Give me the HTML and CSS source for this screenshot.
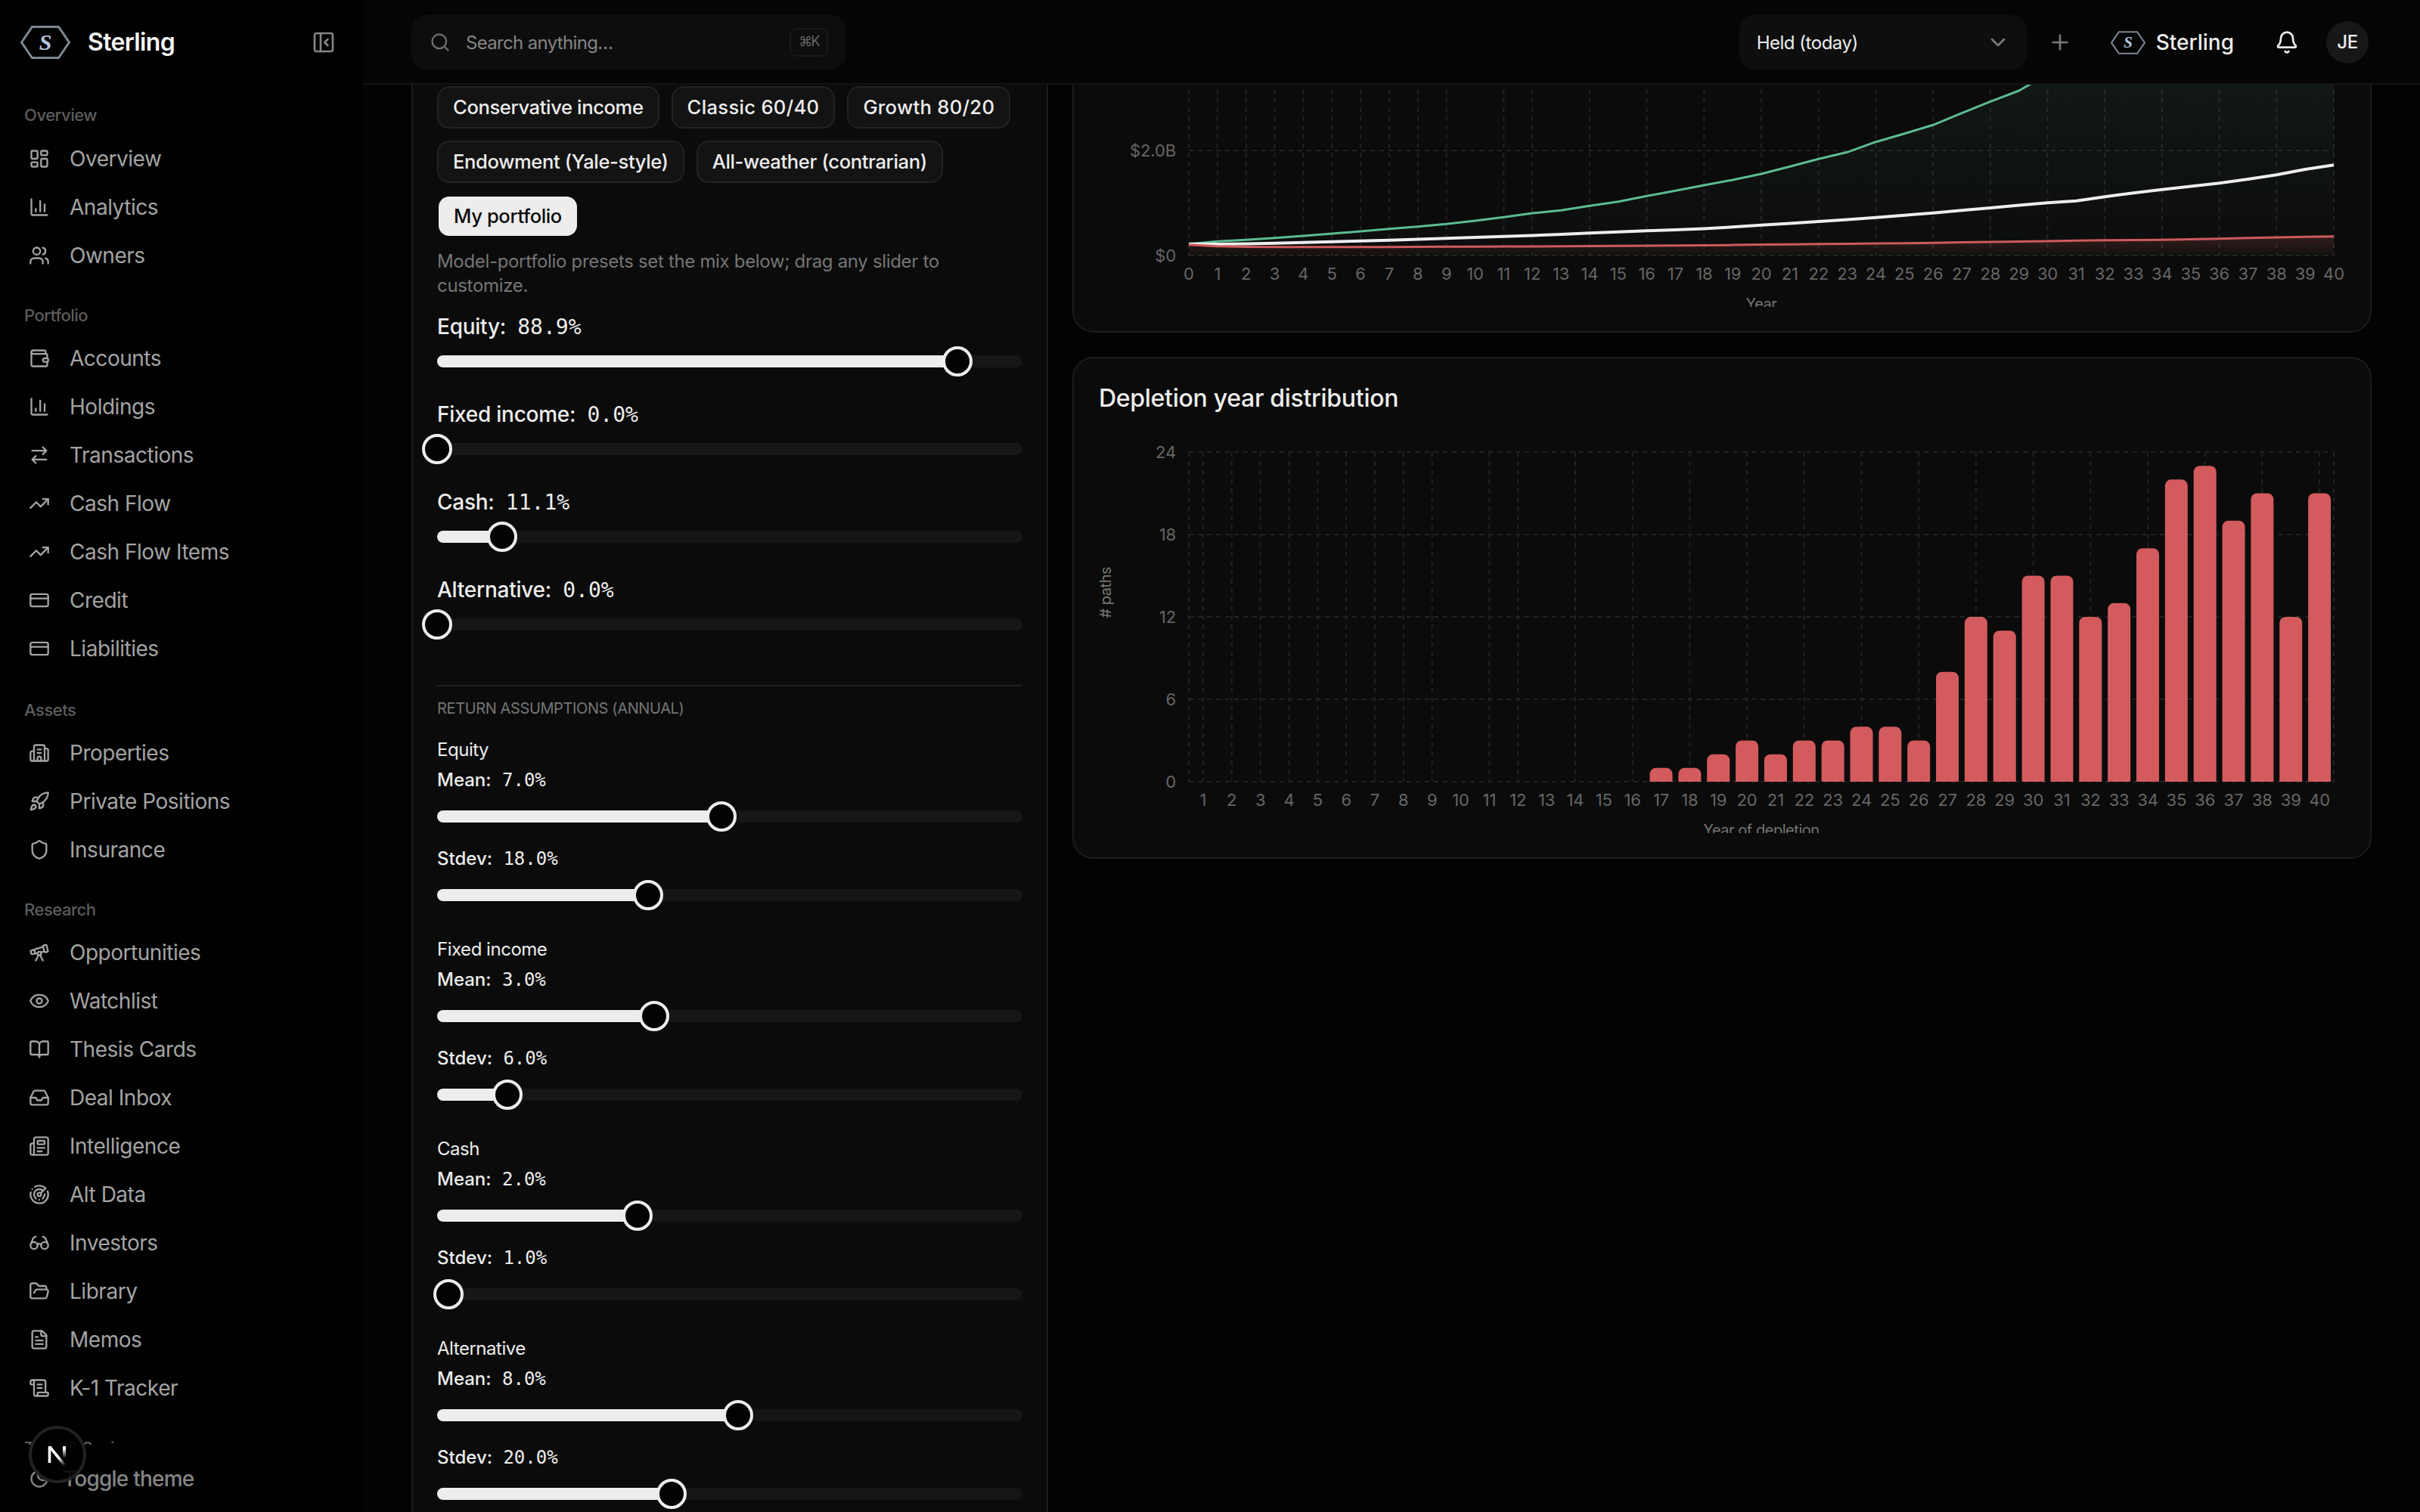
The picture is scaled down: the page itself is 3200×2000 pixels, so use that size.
FILE: index.html
```html
<!DOCTYPE html>
<html lang="en">
<head>
  <meta charset="UTF-8" />
  <meta name="viewport" content="width=device-width, initial-scale=1.0" />
  <title>Sterling</title>
  <link rel="stylesheet" href="styles.css">
</head>
<body>
  <div class="app">
    <!-- Sidebar -->
    <aside class="sidebar">
      <div class="sidebar-header">
        <svg class="logo" viewBox="0 0 66 44">
          <path d="M1.5 22 15.5 1.5h35L64.500 22l-14 20.500h-35z" />
          <text x="33" y="32">S</text>
        </svg>
        <span class="brand">Sterling</span>
        <svg class="icon icon-lg collapse" viewBox="0 0 24 24"><rect width="18" height="18" x="3" y="3" rx="2" /><path d="M9 3v18M16 15l-3-3 3-3" /></svg>
      </div>

      <nav class="nav">
        <div class="nav-group">
          <h3>Overview</h3>
          <a><svg class="icon" viewBox="0 0 24 24"><rect width="7" height="9" x="3" y="3" rx="1" /><rect width="7" height="5" x="14" y="3" rx="1" /><rect width="7" height="9" x="14" y="12" rx="1" /><rect width="7" height="5" x="3" y="16" rx="1" /></svg>Overview</a>
          <a><svg class="icon" viewBox="0 0 24 24"><path d="M3 3v16a2 2 0 0 0 2 2h16M18 17V9M13 17V5M8 17v-3" /></svg>Analytics</a>
          <a><svg class="icon" viewBox="0 0 24 24"><path d="M16 21v-2a4 4 0 0 0-4-4H6a4 4 0 0 0-4 4v2M16 3.128a4 4 0 0 1 0 7.744M22 21v-2a4 4 0 0 0-3-3.870" /><circle cx="9" cy="7" r="4" /></svg>Owners</a>
        </div>
        <div class="nav-group">
          <h3>Portfolio</h3>
          <a><svg class="icon" viewBox="0 0 24 24"><path d="M19 7V4a1 1 0 0 0-1-1H5a2 2 0 0 0 0 4h15a1 1 0 0 1 1 1v4h-3a2 2 0 0 0 0 4h3a1 1 0 0 0 1-1v-2a1 1 0 0 0-1-1" /><path d="M3 5v14a2 2 0 0 0 2 2h15a1 1 0 0 0 1-1v-4" /></svg>Accounts</a>
          <a><svg class="icon" viewBox="0 0 24 24"><path d="M3 3v16a2 2 0 0 0 2 2h16M18 17V9M13 17V5M8 17v-3" /></svg>Holdings</a>
          <a><svg class="icon" viewBox="0 0 24 24"><path d="m16 3 4 4-4 4M20 7H4M8 21l-4-4 4-4M4 17h16" /></svg>Transactions</a>
          <a><svg class="icon" viewBox="0 0 24 24"><path d="M16 7h6v6" /><path d="m22 7-8.500 8.500-5-5L2 17" /></svg>Cash Flow</a>
          <a><svg class="icon" viewBox="0 0 24 24"><path d="M16 7h6v6" /><path d="m22 7-8.500 8.500-5-5L2 17" /></svg>Cash Flow Items</a>
          <a><svg class="icon" viewBox="0 0 24 24"><rect width="20" height="14" x="2" y="5" rx="2" /><path d="M2 10h20" /></svg>Credit</a>
          <a><svg class="icon" viewBox="0 0 24 24"><rect width="20" height="14" x="2" y="5" rx="2" /><path d="M2 10h20" /></svg>Liabilities</a>
        </div>
        <div class="nav-group assets">
          <h3>Assets</h3>
          <a><svg class="icon" viewBox="0 0 24 24"><path d="M10 12h4M10 8h4M14 21v-3a2 2 0 0 0-4 0v3" /><path d="M6 10H4a2 2 0 0 0-2 2v7a2 2 0 0 0 2 2h16a2 2 0 0 0 2-2V9a2 2 0 0 0-2-2h-2" /><path d="M6 21V5a2 2 0 0 1 2-2h8a2 2 0 0 1 2 2v16" /></svg>Properties</a>
          <a><svg class="icon" viewBox="0 0 24 24"><path d="M4.500 16.500c-1.500 1.260-2 5-2 5s3.740-.500 5-2c.710-.840.700-2.130-.090-2.910a2.180 2.180 0 0 0-2.910-.090z" /><path d="m12 15-3-3a22 22 0 0 1 2-3.950A12.880 12.880 0 0 1 22 2c0 2.720-.780 7.500-6 11a22.350 22.350 0 0 1-4 2z" /><path d="M9 12H4s.550-3.030 2-4c1.620-1.080 5 0 5 0M12 15v5s3.030-.550 4-2c1.080-1.620 0-5 0-5" /></svg>Private Positions</a>
          <a><svg class="icon" viewBox="0 0 24 24"><path d="M20 13c0 5-3.500 7.500-7.660 8.950a1 1 0 0 1-.670-.010C7.500 20.500 4 18 4 13V6a1 1 0 0 1 1-1c2 0 4.500-1.200 6.240-2.720a1.170 1.170 0 0 1 1.520 0C14.510 3.810 17 5 19 5a1 1 0 0 1 1 1z" /></svg>Insurance</a>
        </div>
        <div class="nav-group">
          <h3>Research</h3>
          <a><svg class="icon" viewBox="0 0 24 24"><path d="m10.065 12.493-6.180 1.318a.934.934 0 0 1-1.108-.702l-.537-2.150a1.070 1.070 0 0 1 .691-1.265l13.504-4.440M13.560 11.747l4.332-.924M16 21l-3.105-6.210" /><path d="M16.485 5.940a2 2 0 0 1 1.455-2.425l1.090-.272a1 1 0 0 1 1.212.727l1.515 6.060a1 1 0 0 1-.727 1.213l-1.090.272a2 2 0 0 1-2.425-1.455z" /><path d="m6.158 8.633 1.114 4.456M8 21l3.105-6.210" /><circle cx="12" cy="13" r="2" /></svg>Opportunities</a>
          <a><svg class="icon" viewBox="0 0 24 24"><path d="M2.062 12.348a1 1 0 0 1 0-.696 10.750 10.750 0 0 1 19.876 0 1 1 0 0 1 0 .696 10.750 10.750 0 0 1-19.876 0" /><circle cx="12" cy="12" r="3" /></svg>Watchlist</a>
          <a><svg class="icon" viewBox="0 0 24 24"><path d="M12 7v14M3 18a1 1 0 0 1-1-1V4a1 1 0 0 1 1-1h5a4 4 0 0 1 4 4 4 4 0 0 1 4-4h5a1 1 0 0 1 1 1v13a1 1 0 0 1-1 1h-6a3 3 0 0 0-3 3 3 3 0 0 0-3-3z" /></svg>Thesis Cards</a>
          <a><svg class="icon" viewBox="0 0 24 24"><path d="M22 12h-6l-2 3h-4l-2-3H2" /><path d="M5.450 5.110 2 12v6a2 2 0 0 0 2 2h16a2 2 0 0 0 2-2v-6l-3.450-6.890A2 2 0 0 0 16.760 4H7.240a2 2 0 0 0-1.790 1.110z" /></svg>Deal Inbox</a>
          <a><svg class="icon" viewBox="0 0 24 24"><path d="M15 18h-5M18 14h-8M4 22h16a2 2 0 0 0 2-2V4a2 2 0 0 0-2-2H8a2 2 0 0 0-2 2v16a2 2 0 0 1-4 0v-9a2 2 0 0 1 2-2h2" /><rect width="8" height="4" x="10" y="6" rx="1" /></svg>Intelligence</a>
          <a><svg class="icon" viewBox="0 0 24 24"><path d="M19.070 4.930A10 10 0 0 0 6.990 3.340M4 6h.010M2.290 9.620A10 10 0 1 0 21.310 8.350M16.240 7.760A6 6 0 1 0 8.230 16.670M12 18h.010M17.990 11.660A6 6 0 0 1 15.770 16.670" /><circle cx="12" cy="12" r="2" /><path d="m13.410 10.590 5.660-5.660" /></svg>Alt Data</a>
          <a><svg class="icon" viewBox="0 0 24 24"><circle cx="6" cy="15" r="4" /><circle cx="18" cy="15" r="4" /><path d="M14 15a2 2 0 0 0-2-2 2 2 0 0 0-2 2M2.500 13 5 7c.700-1.300 1.400-2 3-2M21.500 13 19 7c-.700-1.300-1.500-2-3-2" /></svg>Investors</a>
          <a><svg class="icon" viewBox="0 0 24 24"><path d="m6 14 1.500-2.900A2 2 0 0 1 9.240 10H20a2 2 0 0 1 1.940 2.500l-1.540 6a2 2 0 0 1-1.950 1.500H4a2 2 0 0 1-2-2V5a2 2 0 0 1 2-2h3.900a2 2 0 0 1 1.690.900l.810 1.200a2 2 0 0 0 1.670.900H18a2 2 0 0 1 2 2v2" /></svg>Library</a>
          <a><svg class="icon" viewBox="0 0 24 24"><path d="M15 2H6a2 2 0 0 0-2 2v16a2 2 0 0 0 2 2h12a2 2 0 0 0 2-2V7Z" /><path d="M14 2v4a2 2 0 0 0 2 2h4M10 9H8M16 13H8M16 17H8" /></svg>Memos</a>
          <a><svg class="icon" viewBox="0 0 24 24"><path d="M15 12h-5M15 8h-5M19 17V5a2 2 0 0 0-2-2H4" /><path d="M8 21h12a2 2 0 0 0 2-2v-1a1 1 0 0 0-1-1H11a1 1 0 0 0-1 1v1a2 2 0 1 1-4 0V5a2 2 0 1 0-4 0v2a1 1 0 0 0 1 1h3" /></svg>K-1 Tracker</a>
        </div>
        <div class="nav-group">
          <h3>Trust &amp; Savings</h3>
        </div>
      </nav>

      <button class="theme-toggle">
        <svg class="icon" viewBox="0 0 24 24"><path d="M12 3a6 6 0 0 0 9 9 9 9 0 1 1-9-9Z" /></svg>Toggle theme
      </button>
    </aside>

    <div class="main">
      <!-- Top bar -->
      <header class="topbar">
        <div class="search">
          <svg class="icon" viewBox="0 0 24 24"><path d="m21 21-4.340-4.340" /><circle cx="11" cy="11" r="8" /></svg>
          <span>Search anything…</span>
          <kbd>⌘K</kbd>
        </div>
        <div class="topbar-right">
          <div class="select">
            <span>Held (today)</span>
            <svg class="icon icon-lg" viewBox="0 0 24 24"><path d="m6 9 6 6 6-6" /></svg>
          </div>
          <svg class="icon icon-lg plus" viewBox="0 0 24 24"><path d="M5 12h14M12 5v14" /></svg>
          <div class="workspace">
            <svg class="logo logo-sm" viewBox="0 0 66 44">
              <path d="M1.500 22 15.500 1.500h35L64.500 22l-14 20.500h-35z" />
              <text x="33" y="32">S</text>
            </svg>
            <span>Sterling</span>
          </div>
          <svg class="icon icon-lg bell" viewBox="0 0 24 24"><path d="M10.268 21a2 2 0 0 0 3.464 0M3.262 15.326A1 1 0 0 0 4 17h16a1 1 0 0 0 .740-1.673C19.410 13.956 18 12.499 18 8A6 6 0 0 0 6 8c0 4.499-1.411 5.956-2.738 7.326" /></svg>
          <div class="avatar">JE</div>
        </div>
      </header>

      <div class="content">
        <!-- Simulation inputs -->
        <section class="panel inputs">
          <div class="presets">
            <button>Conservative income</button>
            <button class="ratio">Classic 60/40</button>
            <button class="ratio">Growth 80/20</button>
            <button>Endowment (Yale-style)</button>
            <button>All-weather (contrarian)</button>
            <button class="active">My portfolio</button>
          </div>
          <p class="hint">Model-portfolio presets set the mix below; drag any slider to customize.</p>

          <div class="mix">
            <div class="field">
              <label>Equity: <span class="mono">88.9%</span></label>
              <div class="slider" style="--value: 88.9%"></div>
            </div>
            <div class="field">
              <label>Fixed income: <span class="mono">0.0%</span></label>
              <div class="slider" style="--value: 0%"></div>
            </div>
            <div class="field">
              <label>Cash: <span class="mono">11.1%</span></label>
              <div class="slider" style="--value: 11.1%"></div>
            </div>
            <div class="field">
              <label>Alternative: <span class="mono">0.0%</span></label>
              <div class="slider" style="--value: 0%"></div>
            </div>
          </div>

          <div class="assumptions">
            <h4>Return assumptions (annual)</h4>
            <div class="asset">
              <p>Equity</p>
              <label>Mean: <span class="mono">7.0%</span></label>
              <div class="slider" style="--value: 48.57%"></div>
              <label>Stdev: <span class="mono">18.0%</span></label>
              <div class="slider" style="--value: 36%"></div>
            </div>
            <div class="asset">
              <p>Fixed income</p>
              <label>Mean: <span class="mono">3.0%</span></label>
              <div class="slider" style="--value: 37.14%"></div>
              <label>Stdev: <span class="mono">6.0%</span></label>
              <div class="slider" style="--value: 12%"></div>
            </div>
            <div class="asset">
              <p>Cash</p>
              <label>Mean: <span class="mono">2.0%</span></label>
              <div class="slider" style="--value: 34.29%"></div>
              <label>Stdev: <span class="mono">1.0%</span></label>
              <div class="slider" style="--value: 2%"></div>
            </div>
            <div class="asset">
              <p>Alternative</p>
              <label>Mean: <span class="mono">8.0%</span></label>
              <div class="slider" style="--value: 51.43%"></div>
              <label>Stdev: <span class="mono">20.0%</span></label>
              <div class="slider" style="--value: 40%"></div>
            </div>
          </div>
        </section>

        <!-- Charts -->
        <div class="charts">
          <section class="panel fan">
            <svg id="fanChart" class="chart" width="1650" height="294" viewBox="0 0 1650 294">
              <defs>
                <linearGradient id="upside" gradientUnits="userSpaceOnUse" x1="0" y1="-250" x2="0" y2="226">
                  <stop offset="0" stop-color="#5dbb92" stop-opacity="0.14" />
                  <stop offset="1" stop-color="#5dbb92" stop-opacity="0.01" />
                </linearGradient>
                <linearGradient id="downside" x1="0" y1="0" x2="0" y2="1">
                  <stop offset="0" stop-color="#d35b5d" stop-opacity="0.2" />
                  <stop offset="1" stop-color="#d35b5d" stop-opacity="0.03" />
                </linearGradient>
              </defs>
            </svg>
          </section>
          <section class="panel depletion">
            <h2>Depletion year distribution</h2>
            <svg id="depletionChart" class="chart" width="1650" height="520" viewBox="0 0 1650 520"></svg>
          </section>
        </div>
      </div>
    </div>
  </div>

  <!-- Dev tools badge -->
  <div class="dev-badge">
    <svg viewBox="0 0 40 40">
      <defs>
        <linearGradient id="fadeDiag" gradientUnits="userSpaceOnUse" x1="20" y1="18" x2="32" y2="33">
          <stop offset="0.3" stop-color="#fff" />
          <stop offset="1" stop-color="#fff" stop-opacity="0" />
        </linearGradient>
        <linearGradient id="fadeStem" gradientUnits="userSpaceOnUse" x1="0" y1="9" x2="0" y2="25">
          <stop offset="0.2" stop-color="#fff" />
          <stop offset="1" stop-color="#fff" stop-opacity="0" />
        </linearGradient>
      </defs>
      <path d="M9.500 31V9" stroke="#fff" />
      <path d="M9.500 9.500 31 36" stroke="url(#fadeDiag)" />
      <rect x="27" y="9" width="4" height="15" fill="url(#fadeStem)" />
    </svg>
  </div>

  <script>
    const NS = 'http://www.w3.org/2000/svg';
    const LEFT = 120;
    const RIGHT = 1634;
    const STEP = (RIGHT - LEFT) / 40;

    function add(svg, tag, attrs, text) {
      const el = document.createElementNS(NS, tag);
      for (const key in attrs) el.setAttribute(key, attrs[key]);
      if (text !== undefined) el.textContent = text;
      svg.appendChild(el);
      return el;
    }

    function hasGridLine(year) {
      return year < 10 || year === 11 || year % 2 === 0 && year !== 10;
    }

    // --- Percentile fan: heights above the axis, one per year ---
    const fan = document.getElementById('fanChart');
    const FAN_BASE = 226;
    const p90 = [15.3, 18.7, 20.7, 23.3, 26, 29, 32, 35.3, 38.3, 41.7, 46, 50.7, 56, 59.7, 65.7, 71.3, 78.7, 85.7, 93, 100, 108, 117.7, 127.7, 136.7, 150.3, 161.3, 172.7, 188.3, 203.7, 218, 240, 258, 280, 300, 322, 345, 370, 395, 420, 450, 480];
    const p50 = [15.3, 15, 15.5, 16.2, 17.2, 18.3, 19.3, 20.3, 21.5, 22.7, 24, 25.3, 26.5, 28, 29.7, 31.2, 32.7, 34, 35.5, 37.8, 40.3, 42.6, 45, 47.6, 50.3, 53.2, 56.3, 59.8, 63, 66.4, 69.7, 72.3, 77.7, 82.8, 87.3, 91.5, 95.7, 101, 106.7, 114, 119.7];
    const p10 = [14.3, 12.3, 11.4, 11.3, 11.3, 11.3, 11.3, 11.3, 11.5, 11.7, 11.8, 12, 12, 12.3, 12.5, 12.8, 13, 13.3, 13.5, 13.9, 14.4, 14.8, 15.2, 15.6, 16, 16.3, 16.7, 17.6, 18.1, 18.6, 19, 19.7, 20.2, 20.5, 20.8, 21.6, 22.3, 23.2, 24, 24.7, 25.3];

    function points(data) {
      return data.map((v, i) => (LEFT + i * STEP).toFixed(1) + ',' + (FAN_BASE - v).toFixed(1)).join(' ');
    }

    for (let i = 0; i <= 40; i++) {
      const x = LEFT + i * STEP;
      if (hasGridLine(i)) add(fan, 'line', { class: 'grid', x1: x, x2: x, y1: -6, y2: FAN_BASE });
      add(fan, 'text', { class: 'tick', x: x, y: 258 }, i);
    }
    [[0, '$0'], [139, '$2.0B']].forEach(([h, label]) => {
      add(fan, 'line', { class: 'grid', x1: LEFT, x2: RIGHT, y1: FAN_BASE - h, y2: FAN_BASE - h });
      add(fan, 'text', { class: 'tick tick-y', x: 103, y: FAN_BASE - h + 8 }, label);
    });
    const close = ` ${RIGHT},${FAN_BASE} ${LEFT},${FAN_BASE}`;
    add(fan, 'polygon', { points: points(p90) + close, fill: 'url(#upside)' });
    add(fan, 'polygon', { points: points(p10) + close, fill: 'url(#downside)' });
    add(fan, 'polyline', { class: 'line p90', points: points(p90) });
    add(fan, 'polyline', { class: 'line p50', points: points(p50) });
    add(fan, 'polyline', { class: 'line p10', points: points(p10) });
    add(fan, 'text', { class: 'axis-label', x: (LEFT + RIGHT) / 2, y: 296.5 }, 'Year');

    // --- Depletion histogram ---
    const hist = document.getElementById('depletionChart');
    const HIST_BASE = 452;
    const UNIT = 436 / 24;
    const FIRST_YEAR = 17;
    const paths = [1, 1, 2, 3, 2, 3, 3, 4, 4, 3, 8, 12, 11, 15, 15, 12, 13, 17, 22, 23, 19, 21, 12, 21];

    [LEFT, RIGHT].forEach(x => add(hist, 'line', { class: 'grid', x1: x, x2: x, y1: 16, y2: HIST_BASE }));
    for (let n = 1; n <= 40; n++) {
      const x = LEFT + (n - 0.5) * STEP;
      if (hasGridLine(n)) add(hist, 'line', { class: 'grid', x1: x, x2: x, y1: 16, y2: HIST_BASE });
      add(hist, 'text', { class: 'tick', x: x, y: 484 }, n);
    }
    for (let v = 0; v <= 24; v += 6) {
      const y = HIST_BASE - v * UNIT;
      add(hist, 'line', { class: 'grid', x1: LEFT, x2: RIGHT, y1: y, y2: y });
      add(hist, 'text', { class: 'tick tick-y', x: 103, y: y + 8 }, v);
    }
    paths.forEach((count, i) => {
      const x = LEFT + (FIRST_YEAR + i - 0.5) * STEP - 15;
      const h = count * UNIT;
      add(hist, 'path', { class: 'bar', d: `M${x} ${HIST_BASE}v${-(h - 8)}a8 8 0 0 1 8-8h14a8 8 0 0 1 8 8v${h - 8}z` });
    });
    add(hist, 'text', { class: 'axis-label', x: (LEFT + RIGHT) / 2, y: 522.5 }, 'Year of depletion');
    add(hist, 'text', { class: 'axis-label axis-label-y', transform: 'translate(17 235.500) rotate(-90)' }, '# paths');
  </script>
</body>
</html>
```
FILE: styles.css
```css
*,
*::before,
*::after {
  box-sizing: border-box;
  margin: 0;
  padding: 0;
}

body {
  background-color: #030303;
  color: #ededed;
  font-family: Inter, "Liberation Sans", sans-serif;
  font-size: 28px;
  letter-spacing: -0.017em;
  height: 2000px;
  overflow: hidden;
}

button {
  font: inherit;
  letter-spacing: inherit;
  color: inherit;
}

.mono {
  margin-left: 8px;
  font-family: "DejaVu Sans Mono", "Liberation Mono", monospace;
  letter-spacing: 0;
}

.icon {
  width: 28px;
  height: 28px;
  flex-shrink: 0;
  fill: none;
  stroke: currentColor;
  stroke-width: 2;
  stroke-linecap: round;
  stroke-linejoin: round;
}

.icon-lg {
  width: 32px;
  height: 32px;
}

.app {
  display: flex;
  height: 2000px;
}

/* Sidebar */
.sidebar {
  width: 480px;
  display: flex;
  flex-direction: column;
  background-color: #010101;
}

.sidebar-header {
  height: 112px;
  display: flex;
  align-items: center;
  padding: 0 36px 0 27px;
}

.logo {
  width: 66px;
  height: 44px;
}

.logo path {
  fill: none;
  stroke: #7d8793;
  stroke-width: 3;
}

.logo text {
  fill: #b4c6dc;
  font-family: "Liberation Serif", serif;
  font-size: 30px;
  font-style: italic;
  font-weight: 700;
  letter-spacing: 0;
  text-anchor: middle;
}

.brand {
  margin-left: 23px;
  padding-bottom: 2px;
  font-size: 32px;
  font-weight: 600;
  letter-spacing: -0.02em;
  color: #f5f5f5;
}

.collapse {
  margin-left: auto;
  color: #858585;
}

.nav {
  height: 1799px;
  padding-top: 16px;
  overflow: hidden;
  color: #a3a3a3;
}

.nav-group {
  margin-bottom: 22px;
}

.nav-group.assets {
  margin-top: 24px;
}

.nav-group h3 {
  height: 50px;
  padding-left: 32px;
  line-height: 50px;
  font-size: 22px;
  font-weight: 500;
  color: #5c5c5c;
}

.nav-group:first-child h3 {
  line-height: 48px;
}

.nav-group a {
  height: 64px;
  display: flex;
  align-items: center;
  gap: 26px;
  padding-left: 38px;
}

.theme-toggle {
  height: 88px;
  display: flex;
  align-items: center;
  gap: 17px;
  padding: 2px 0 0 38px;
  background: none;
  border: none;
  font-weight: 500;
  letter-spacing: -0.028em;
  color: #858585;
}

/* Top bar */
.main {
  flex: 1;
  min-width: 0;
}

.topbar {
  height: 112px;
  display: flex;
  align-items: center;
  justify-content: space-between;
  padding: 2px 68px 0 64px;
  background-color: #050505;
  border-bottom: 2px solid #141414;
  font-size: 24px;
}

.search {
  width: 575px;
  height: 72px;
  display: flex;
  align-items: center;
  gap: 20px;
  padding: 0 24px;
  background-color: #0d0d0d;
  border-radius: 20px;
  color: #858585;
  letter-spacing: -0.028em;
}

.search .icon {
  color: #6e6e6e;
}

.search kbd {
  width: 51px;
  height: 38px;
  margin-left: auto;
  line-height: 32px;
  border: 2px solid #1a1a1a;
  border-radius: 10px;
  font-family: inherit;
  font-size: 18px;
  letter-spacing: -0.1em;
  text-align: center;
  color: #666666;
}

.topbar-right {
  display: flex;
  align-items: center;
}

.select {
  width: 380px;
  height: 72px;
  display: flex;
  align-items: center;
  justify-content: space-between;
  padding: 0 22px 0 23px;
  background-color: #0e0e0e;
  border-radius: 20px;
  letter-spacing: -0.02em;
}

.select .icon {
  color: #7a7a7a;
}

.plus {
  margin-left: 28px;
  color: #7a7a7a;
}

.workspace {
  display: flex;
  align-items: center;
  gap: 14px;
  margin-left: 51px;
  font-size: 28px;
  font-weight: 500;
  letter-spacing: 0;
}

.logo-sm {
  width: 46px;
  height: 31px;
}

.bell {
  margin-left: 54px;
}

.avatar {
  width: 56px;
  height: 56px;
  margin-left: 36px;
  line-height: 56px;
  border-radius: 50%;
  background-color: #171717;
  text-align: center;
  font-weight: 500;
}

/* Content */
.content {
  height: 1888px;
  display: grid;
  grid-template-columns: 842px 1718px;
  gap: 32px;
  padding: 0 64px;
  overflow: hidden;
}

.panel {
  background-color: #0b0b0b;
  border: 2px solid #1c1c1c;
  border-radius: 28px;
  padding: 32px;
}

.inputs {
  height: 2100px;
  border-top: none;
  border-radius: 0;
  padding-top: 2px;
}

.presets {
  display: flex;
  flex-wrap: wrap;
  gap: 16px;
}

.presets button {
  height: 56px;
  padding: 0 19px 2px;
  background-color: #131313;
  border: 2px solid #222222;
  border-radius: 16px;
  font-size: 25.6px;
  font-weight: 500;
  letter-spacing: -0.015em;
}

.presets .ratio {
  letter-spacing: 0.012em;
}

.presets .active {
  padding: 0 20px 2px;
  background-color: #ededed;
  background-clip: padding-box;
  border-color: transparent;
  color: #0a0a0a;
}

.hint {
  margin-top: 16px;
  font-size: 24px;
  line-height: 32px;
  letter-spacing: -0.0135em;
  color: #757575;
}

.mix {
  display: flex;
  flex-direction: column;
  gap: 30px;
  margin-top: 18px;
}

.field label {
  display: block;
  height: 40px;
  margin-bottom: 6px;
  line-height: 41px;
  font-weight: 500;
  letter-spacing: -0.009em;
}

.slider {
  height: 40px;
  position: relative;
  display: flex;
  align-items: center;
}

.slider::before {
  content: "";
  width: 100%;
  height: 16px;
  border-radius: 8px;
  background: linear-gradient(#ededed, #ededed) no-repeat 0 0 / var(--value) 100%, #161616;
}

/* Thumb sits over the track */
.slider::after {
  content: "";
  position: absolute;
  left: var(--value);
  width: 40px;
  height: 40px;
  margin-left: -20px;
  border: 4px solid #ededed;
  border-radius: 50%;
  background-color: #030303;
}

.assumptions {
  margin-top: 60px;
  padding-top: 14px;
  border-top: 2px solid #1f1f1f;
  font-size: 24px;
}

.assumptions h4 {
  height: 30px;
  line-height: 30px;
  margin-bottom: 24px;
  font-size: 20px;
  font-weight: 400;
  letter-spacing: -0.019em;
  text-transform: uppercase;
  color: #757575;
}

.asset {
  margin-bottom: 36px;
}

.asset p {
  height: 32px;
  line-height: 32px;
  margin-bottom: 8px;
}

.asset label {
  display: block;
  height: 32px;
  margin-bottom: 12px;
  line-height: 32px;
  font-weight: 500;
  letter-spacing: 0;
}

.asset .slider + label {
  margin-top: 20px;
}

/* Charts */
.charts {
  display: flex;
  flex-direction: column;
  gap: 32px;
}

.fan {
  height: 328px;
  padding-top: 0;
  border-top: none;
  border-radius: 0 0 28px 28px;
}

.depletion {
  height: 664px;
}

.depletion h2 {
  height: 42px;
  margin: 0 0 34px 1px;
  line-height: 42px;
  font-size: 32px;
  font-weight: 500;
  letter-spacing: -0.009em;
}

.chart {
  display: block;
  overflow: hidden;
}

.grid {
  stroke: #232323;
  stroke-width: 2;
  stroke-dasharray: 6 6;
}

.tick {
  fill: #666666;
  font-size: 22px;
  letter-spacing: -0.005em;
  text-anchor: middle;
}

.tick-y {
  text-anchor: end;
}

.axis-label {
  fill: #757575;
  font-size: 20px;
  letter-spacing: -0.023em;
  text-anchor: middle;
}

.axis-label-y {
  text-anchor: start;
}

.line {
  fill: none;
  stroke-width: 3;
  stroke-linejoin: round;
}

.p90 {
  stroke: #5dbb92;
}

.p50 {
  stroke: #ededed;
  stroke-width: 4;
}

.p10 {
  stroke: #cd5a5d;
}

.bar {
  fill: #d35b5d;
}

/* Floating badge */
.dev-badge {
  position: fixed;
  left: 38px;
  bottom: 38px;
  width: 76px;
  height: 76px;
  display: flex;
  align-items: center;
  justify-content: center;
  border: 4px solid #222222;
  border-radius: 50%;
  background-color: rgba(0, 0, 0, 0.88);
}

.dev-badge svg {
  width: 40px;
  height: 40px;
  fill: none;
  stroke-width: 3.6;
}

.dev-badge rect {
  stroke: none;
}
```
